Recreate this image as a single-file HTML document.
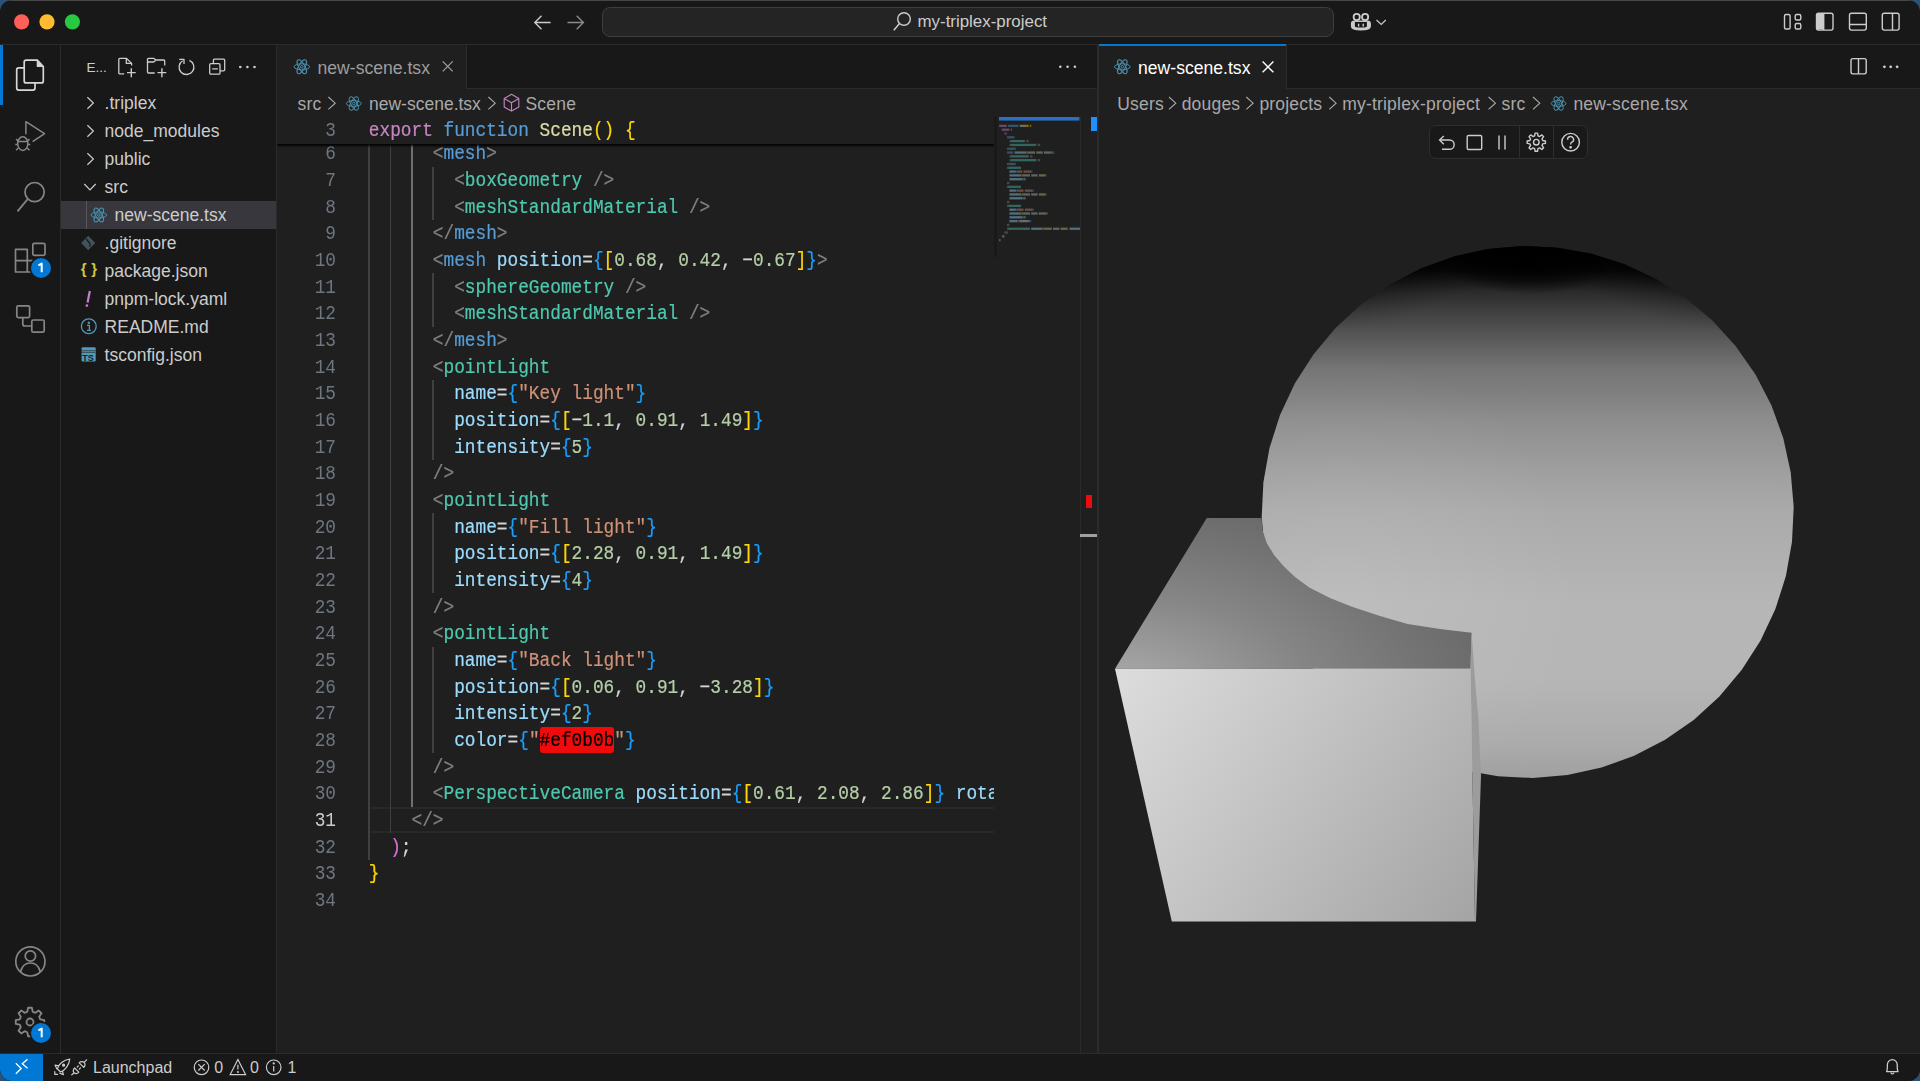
<!DOCTYPE html><html><head><meta charset="utf-8"><style>
*{margin:0;padding:0;box-sizing:border-box}
html,body{width:1920px;height:1081px;overflow:hidden;background:#2b5276}
.win{position:absolute;left:0;top:0;width:1920px;height:1081px;border-radius:12px;overflow:hidden;background:#181818}
.t{position:absolute;white-space:pre;font-family:"Liberation Sans",sans-serif;color:#cccccc}
.m{font-family:"Liberation Mono",monospace}
svg{position:absolute;overflow:visible}
.ln{transform:scaleY(1.13);position:absolute;left:277px;width:59px;text-align:right;font-family:"Liberation Mono",monospace;font-size:17.8px;color:#6e7681;height:26.67px;line-height:26.67px;white-space:pre}
.cl{-webkit-text-stroke:0.2px currentColor;transform:scaleY(1.13);position:absolute;left:368.8px;font-family:"Liberation Mono",monospace;font-size:17.8px;color:#d4d4d4;height:26.67px;line-height:26.67px;white-space:pre}
.k{color:#c586c0}.b{color:#569cd6}.f{color:#dcdcaa}.g{color:#ffd700}.o{color:#da70d6}.bb{color:#179fff}
.p{color:#808080}.tl{color:#4ec9b0}.a{color:#9cdcfe}.n{color:#b5cea8}.s{color:#ce9178}
</style></head><body><div class="win"><div style="position:absolute;left:0px;top:0px;width:1920px;height:1px;background:#464646"></div><div style="position:absolute;left:0px;top:44px;width:1920px;height:1px;background:#2b2b2b"></div><svg style="left:0px;top:0px" width="100" height="44"><circle cx="21.6" cy="21.8" r="7.6" fill="#ff5f57"/><circle cx="47" cy="21.8" r="7.6" fill="#febc2e"/><circle cx="72.4" cy="21.8" r="7.6" fill="#28c840"/></svg><svg style="left:530px;top:10px" width="60" height="25" viewBox="530 10 60 25" ><path d="M550.6 22.5 H535 M541.5 15.8 L534.8 22.5 L541.5 29.2" stroke="#cccccc" stroke-width="1.4" fill="none"/><path d="M567.5 22.5 H583.2 M576.7 15.8 L583.4 22.5 L576.7 29.2" stroke="#8a8a8a" stroke-width="1.4" fill="none"/></svg><div style="position:absolute;left:602px;top:7px;width:732px;height:30px;background:#242424;border:1px solid #3e3e3e;border-radius:8px"></div><svg style="left:890px;top:10px" width="25" height="25" viewBox="890 10 25 25"><circle cx="904" cy="19" r="6.3" stroke="#cccccc" stroke-width="1.4" fill="none"/><path d="M899.5 23.5 L893.8 30.2" stroke="#cccccc" stroke-width="1.5"/></svg><div class="t" style="left:917.5px;top:7.199999999999999px;height:30px;line-height:30px;font-size:16.9px;color:#cccccc">my-triplex-project</div><svg style="left:1348px;top:10px" width="42" height="25" viewBox="1348 10 42 25"><path d="M1351.5 23.8 C1351.5 22 1352.8 21.2 1354.5 21.2 H1367.3 C1369 21.2 1370.3 22 1370.3 23.8 V26.3 C1370.3 28.8 1366.5 30 1360.9 30 C1355.3 30 1351.5 28.8 1351.5 26.3 Z" fill="#cccccc" stroke="#cccccc" stroke-width="1.2"/><path d="M1354.9 22 H1366.9 V26.2 C1366.9 27.2 1364 27.6 1360.9 27.6 C1357.8 27.6 1354.9 27.2 1354.9 26.2 Z" fill="#181818"/><rect x="1357.9" y="23.4" width="1.4" height="3.3" rx="0.7" fill="#cccccc"/><rect x="1362.5" y="23.4" width="1.4" height="3.3" rx="0.7" fill="#cccccc"/><circle cx="1356.7" cy="17" r="3.1" stroke="#cccccc" stroke-width="1.8" fill="#181818"/><circle cx="1365.1" cy="17" r="3.1" stroke="#cccccc" stroke-width="1.8" fill="#181818"/><path d="M1376.5 20 L1381.2 24.4 L1385.8 20" stroke="#cccccc" stroke-width="1.2" fill="none"/></svg><svg style="left:1780px;top:10px" width="125" height="25" viewBox="1780 10 125 25" fill="none" stroke="#cccccc" stroke-width="1.4"><rect x="1784.5" y="14.5" width="5.6" height="14.5" rx="1.5"/><rect x="1795.2" y="14.5" width="5.6" height="5.5" rx="1.5"/><rect x="1795.2" y="23.5" width="5.6" height="5.5" rx="1.5"/><rect x="1816.5" y="13.3" width="16.5" height="16.8" rx="2"/><rect x="1817" y="13.8" width="6.5" height="15.8" fill="#cccccc" stroke="none"/><path d="M1823.7 13.3 V30"/><rect x="1849.5" y="13.3" width="16.8" height="16.8" rx="2"/><path d="M1849.5 24.5 H1866.3"/><rect x="1882.3" y="13.3" width="16.8" height="16.8" rx="2"/><path d="M1892.5 13.3 V30"/></svg><div style="position:absolute;left:60px;top:45px;width:1px;height:1008px;background:#2b2b2b"></div><div style="position:absolute;left:0px;top:45px;width:2.6px;height:60px;background:#0078d4"></div><svg style="left:0px;top:45px" width="60" height="1008" viewBox="0 45 60 1008" fill="none" stroke-width="1.7" stroke-linejoin="round"><path d="M24.3 67.8 H18.7 a2 2 0 0 0 -2 2 V88.1 a2 2 0 0 0 2 2 H33 a2 2 0 0 0 2 -2 V82.9" stroke="#d7d7d7"/><path d="M26.2 60.1 H37.3 L43.3 66.5 V80.9 a2 2 0 0 1 -2 2 H26.2 a2 2 0 0 1 -2 -2 V62.1 a2 2 0 0 1 2 -2 Z" stroke="#d7d7d7"/><path d="M37.3 60.5 V66.3 H43" stroke="#d7d7d7" fill="#d7d7d7" stroke-width="1.2"/><path d="M25.9 134.3 V121.7 L44.6 133.7 L32.6 141.6" stroke="#868686" stroke-width="1.5"/><ellipse cx="22.8" cy="143.6" rx="5.1" ry="6.8" stroke="#868686" stroke-width="1.5"/><path d="M17.8 141.6 H27.8 M16.1 139.1 L18.4 141.1 M29.5 139.1 L27.2 141.1 M15.3 144.6 H17.6 M28 144.6 H30.3 M16.1 150.2 L18.4 148 M29.5 150.2 L27.2 148" stroke="#868686" stroke-width="1.5"/><circle cx="34.6" cy="192.1" r="9.6" stroke="#868686"/><path d="M27.8 199 L17.5 211.4" stroke="#868686" stroke-width="1.9"/><path d="M15.5 249.3 H27.3 V272 H15.5 Z M15.5 260.6 H39 V272 H27.3" stroke="#868686"/><rect x="32.8" y="243.3" width="12.2" height="12" rx="1.5" stroke="#868686"/><rect x="16.8" y="305.8" width="12.8" height="11.8" rx="1.5" stroke="#868686"/><rect x="31.8" y="320" width="12.4" height="12.2" rx="1.5" stroke="#868686"/><path d="M22.8 317.6 V324 a2 2 0 0 0 2 2 H31.8" stroke="#868686"/><circle cx="30.4" cy="961.4" r="14.6" stroke="#868686"/><circle cx="30.4" cy="956" r="5.2" stroke="#868686"/><path d="M20.5 972 C22 965.5 26 963 30.4 963 C34.8 963 38.8 965.5 40.3 972" stroke="#868686"/></svg><svg style="left:0px;top:990px" width="60" height="60" viewBox="0 990 60 60" fill="none"><path d="M40.25 1019.28 L44.27 1020.08 L44.27 1023.92 L40.25 1024.72 L39.17 1027.32 L41.45 1030.74 L38.74 1033.45 L35.32 1031.17 L32.72 1032.25 L31.92 1036.27 L28.08 1036.27 L27.28 1032.25 L24.68 1031.17 L21.26 1033.45 L18.55 1030.74 L20.83 1027.32 L19.75 1024.72 L15.73 1023.92 L15.73 1020.08 L19.75 1019.28 L20.83 1016.68 L18.55 1013.26 L21.26 1010.55 L24.68 1012.83 L27.28 1011.75 L28.08 1007.73 L31.92 1007.73 L32.72 1011.75 L35.32 1012.83 L38.74 1010.55 L41.45 1013.26 L39.17 1016.68 Z" stroke="#868686" stroke-width="1.8" stroke-linejoin="round"/><circle cx="30" cy="1022" r="3.5" stroke="#868686" stroke-width="1.8"/></svg><div style="position:absolute;left:30.799999999999997px;top:258.2px;width:20px;height:20px;border-radius:10px;background:#0078d4;box-shadow:0 0 0 1.5px #181818"></div><svg style="left:30.799999999999997px;top:258.2px" width="20" height="20" viewBox="30.799999999999997 258.2 20 20"><path d="M38.199999999999996 265.59999999999997 L41.5 263.8 V272.5" stroke="#fff" stroke-width="2" fill="none" stroke-linejoin="round"/></svg><div style="position:absolute;left:30.700000000000003px;top:1022.5999999999999px;width:20px;height:20px;border-radius:10px;background:#0078d4;box-shadow:0 0 0 1.5px #181818"></div><svg style="left:30.700000000000003px;top:1022.5999999999999px" width="20" height="20" viewBox="30.700000000000003 1022.5999999999999 20 20"><path d="M38.1 1030.0 L41.400000000000006 1028.1999999999998 V1036.8999999999999" stroke="#fff" stroke-width="2" fill="none" stroke-linejoin="round"/></svg><div style="position:absolute;left:276px;top:45px;width:1px;height:1008px;background:#2b2b2b"></div><div class="t" style="left:86.5px;top:57.5px;height:20px;line-height:20px;font-size:13.6px;color:#cccccc">E...</div><svg style="left:110px;top:50px" width="160" height="35" viewBox="110 50 160 35" fill="none" stroke="#cccccc" stroke-width="1.3" stroke-linejoin="round"><path d="M124.2 73.9 H119.8 a1 1 0 0 1 -1 -1 V59.3 a1 1 0 0 1 1 -1 H126.3 L131.6 63.4 V65.6"/><path d="M126.3 58.3 V63.4 H131.6"/><path d="M131.3 68.2 V77.2 M127 72.6 H135.7" stroke-width="1.4"/><path d="M154.7 73 H148.5 a1 1 0 0 1 -1 -1 V59.3 a1 1 0 0 1 1 -1 H153.7 L155.7 60 H163.7 a1 1 0 0 1 1 1 V65.6"/><path d="M147.5 62 H153.7 L155.7 60.2"/><path d="M161.9 68.2 V77.2 M157.5 72.6 H166.3" stroke-width="1.4"/><path d="M189.4 60.3 A7.4 7.4 0 1 1 182.6 60.8"/><path d="M179.2 59.3 H184 V64"/><path d="M213.4 63.6 V60.2 a1 1 0 0 1 1 -1 H223.7 a1 1 0 0 1 1 1 V69.8 a1 1 0 0 1 -1 1 H220"/><rect x="209.7" y="63.6" width="10.3" height="10.6" rx="1.2"/><path d="M212.2 68.8 H217.9"/></svg><svg style="left:235px;top:60px" width="25" height="15" viewBox="235 60 25 15" fill="#cccccc"><circle cx="240.3" cy="67" r="1.3"/><circle cx="247.4" cy="67" r="1.3"/><circle cx="254.5" cy="67" r="1.3"/></svg><div style="position:absolute;left:61px;top:201px;width:215px;height:28px;background:#37373d"></div><div style="position:absolute;left:86.3px;top:201px;width:1px;height:28px;background:#585858"></div><svg style="left:61px;top:85px" width="215" height="290" viewBox="61 85 215 290"><path d="M87.4 97.2 L93.4 103 L87.4 108.8" stroke="#cccccc" stroke-width="1.2" fill="none"/><path d="M87.4 125.2 L93.4 131 L87.4 136.8" stroke="#cccccc" stroke-width="1.2" fill="none"/><path d="M87.4 153.2 L93.4 159 L87.4 164.8" stroke="#cccccc" stroke-width="1.2" fill="none"/><path d="M84.3 184 L90 190 L95.7 184" stroke="#cccccc" stroke-width="1.2" fill="none"/><g transform="translate(98.8 215)" fill="none" stroke="#4a8fae" stroke-width="1.0"><ellipse rx="7.8" ry="3.0"/><ellipse rx="7.8" ry="3.0" transform="rotate(60)"/><ellipse rx="7.8" ry="3.0" transform="rotate(-60)"/><circle r="1.3" fill="none" stroke-width="1.0"/></g><path d="M88.2 235.7 L95.3 243 L88.2 250.3 L81.1 243 Z" fill="#41535b"/><path d="M86.2 239 L90 243.5 V247" stroke="#181818" stroke-width="1.2" fill="none"/><text x="80.8" y="274.2" font-family="Liberation Sans" font-size="15" font-weight="bold" fill="#cbcb41" letter-spacing="0.2">{ }</text><path d="M89.8 291 L87.6 302.5" stroke="#c47fd0" stroke-width="2.2"/><circle cx="86.9" cy="305.6" r="1.3" fill="#c47fd0"/><circle cx="88.8" cy="326.2" r="7.4" stroke="#519aba" stroke-width="1.3" fill="none"/><circle cx="88.8" cy="322.7" r="1.2" fill="#519aba"/><path d="M87 325.4 H89.4 V330.2 M86.9 330.3 H90.9" stroke="#519aba" stroke-width="1.3" fill="none"/><rect x="81.6" y="347.2" width="14.1" height="14.3" rx="1.2" fill="#519aba"/><path d="M81.3 350.7 H95.3 M81.3 352.4 H95.3" stroke="#1b1b1b" stroke-width="0.6"/><text x="82.3" y="361" font-family="Liberation Sans" font-size="9" font-weight="bold" fill="#1b1b1b">TS</text></svg><div class="t" style="left:104.6px;top:89.0px;height:28px;line-height:28px;font-size:17.5px;color:#cccccc">.triplex</div><div class="t" style="left:104.6px;top:117.0px;height:28px;line-height:28px;font-size:17.5px;color:#cccccc">node_modules</div><div class="t" style="left:104.6px;top:145.0px;height:28px;line-height:28px;font-size:17.5px;color:#cccccc">public</div><div class="t" style="left:104.6px;top:173.0px;height:28px;line-height:28px;font-size:17.5px;color:#cccccc">src</div><div class="t" style="left:114.6px;top:201.0px;height:28px;line-height:28px;font-size:17.5px;color:#cccccc">new-scene.tsx</div><div class="t" style="left:104.6px;top:229.0px;height:28px;line-height:28px;font-size:17.5px;color:#cccccc">.gitignore</div><div class="t" style="left:104.6px;top:257.0px;height:28px;line-height:28px;font-size:17.5px;color:#cccccc">package.json</div><div class="t" style="left:104.6px;top:285.0px;height:28px;line-height:28px;font-size:17.5px;color:#cccccc">pnpm-lock.yaml</div><div class="t" style="left:104.6px;top:313.0px;height:28px;line-height:28px;font-size:17.5px;color:#cccccc">README.md</div><div class="t" style="left:104.6px;top:341.0px;height:28px;line-height:28px;font-size:17.5px;color:#cccccc">tsconfig.json</div><div style="position:absolute;left:277px;top:45px;width:821px;height:44px;background:#181818"></div><div style="position:absolute;left:277px;top:88px;width:821px;height:1px;background:#2b2b2b"></div><div style="position:absolute;left:277px;top:45px;width:189px;height:44px;background:#1f1f1f"></div><div style="position:absolute;left:466px;top:45px;width:1px;height:43px;background:#2b2b2b"></div><svg style="left:285px;top:52px" width="180" height="30" viewBox="285 52 180 30"><g transform="translate(301.8 66.8)" fill="none" stroke="#4a8fae" stroke-width="1.0"><ellipse rx="7.8" ry="3.0"/><ellipse rx="7.8" ry="3.0" transform="rotate(60)"/><ellipse rx="7.8" ry="3.0" transform="rotate(-60)"/><circle r="1.3" fill="none" stroke-width="1.0"/></g><path d="M442.7 61.4 L452.7 71.4 M452.7 61.4 L442.7 71.4" stroke="#9d9d9d" stroke-width="1.3"/></svg><div class="t" style="left:317.5px;top:54.0px;height:28px;line-height:28px;font-size:17.6px;color:#9d9d9d">new-scene.tsx</div><svg style="left:1050px;top:60px" width="30" height="15" viewBox="1050 60 30 15" fill="#cccccc"><circle cx="1060.3" cy="66.8" r="1.3"/><circle cx="1067.6" cy="66.8" r="1.3"/><circle cx="1074.9" cy="66.8" r="1.3"/></svg><div style="position:absolute;left:277px;top:89px;width:820px;height:964px;background:#1f1f1f"></div><div class="t" style="left:297.5px;top:89.5px;height:28px;line-height:28px;font-size:17.5px;letter-spacing:0.2px;color:#a9a9a9">src</div><svg style="left:320px;top:90px" width="230" height="28" viewBox="320 90 230 28"><path d="M328.4 97 L335.2 103.2 L328.4 109.4" stroke="#a9a9a9" stroke-width="1.1" fill="none"/><g transform="translate(353.8 103.5)" fill="none" stroke="#4a8fae" stroke-width="1.0"><ellipse rx="7.409999999999999" ry="2.8499999999999996"/><ellipse rx="7.409999999999999" ry="2.8499999999999996" transform="rotate(60)"/><ellipse rx="7.409999999999999" ry="2.8499999999999996" transform="rotate(-60)"/><circle r="1.2349999999999999" fill="none" stroke-width="1.0"/></g><path d="M488.4 97 L495.2 103.2 L488.4 109.4" stroke="#a9a9a9" stroke-width="1.1" fill="none"/><g fill="none" stroke="#c586c0" stroke-width="1.1" stroke-linejoin="round"><path d="M511.5 94.3 L518.8 98.5 V107 L511.5 111.1 L504.2 107 V98.5 Z"/><path d="M504.2 98.5 L511.5 102.7 L518.8 98.5 M511.5 102.7 V111.1"/></g></svg><div class="t" style="left:369px;top:89.5px;height:28px;line-height:28px;font-size:17.5px;letter-spacing:0.0px;color:#a9a9a9">new-scene.tsx</div><div class="t" style="left:525.5px;top:89.5px;height:28px;line-height:28px;font-size:17.5px;letter-spacing:0.2px;color:#a9a9a9">Scene</div><div style="position:absolute;left:277px;top:117px;width:717px;height:936px;overflow:hidden"><div style="position:absolute;left:92px;top:689.8px;width:625px;height:26.667px;border-top:2px solid #282828;border-bottom:2px solid #282828"></div><div style="position:absolute;left:262.68000000000006px;top:609.8px;width:74.75999999999999px;height:26.3px;background:#ef0b0b;border-radius:3px"></div><div style="position:absolute;left:91.30000000000001px;top:-30.20900000000006px;width:1.5px;height:773.3430000000001px;background:#404040"></div><div style="position:absolute;left:112.66000000000003px;top:-3.5420000000001437px;width:1.5px;height:720.0090000000001px;background:#404040"></div><div style="position:absolute;left:134.01999999999998px;top:23.124999999999886px;width:1.5px;height:666.6750000000001px;background:#707070"></div><div style="position:absolute;left:155.38px;top:49.791999999999916px;width:1.5px;height:53.33400000000006px;background:#404040"></div><div style="position:absolute;left:155.38px;top:156.45999999999992px;width:1.5px;height:53.334px;background:#404040"></div><div style="position:absolute;left:155.38px;top:263.12799999999993px;width:1.5px;height:80.00099999999998px;background:#404040"></div><div style="position:absolute;left:155.38px;top:396.46299999999997px;width:1.5px;height:80.00099999999998px;background:#404040"></div><div style="position:absolute;left:155.38px;top:529.798px;width:1.5px;height:106.66799999999989px;background:#404040"></div><div class="ln" style="left:0;top:-29.90900000000006px;">4</div><div class="ln" style="left:0;top:-3.242000000000144px;">5</div><div class="ln" style="left:0;top:23.424999999999887px;">6</div><div class="cl" style="left:91.80000000000001px;top:23.424999999999887px">      <span class="p">&lt;</span><span class="b">mesh</span><span class="p">&gt;</span></div><div class="ln" style="left:0;top:50.09199999999991px;">7</div><div class="cl" style="left:91.80000000000001px;top:50.09199999999991px">        <span class="p">&lt;</span><span class="tl">boxGeometry</span> <span class="p">/&gt;</span></div><div class="ln" style="left:0;top:76.75899999999994px;">8</div><div class="cl" style="left:91.80000000000001px;top:76.75899999999994px">        <span class="p">&lt;</span><span class="tl">meshStandardMaterial</span> <span class="p">/&gt;</span></div><div class="ln" style="left:0;top:103.42599999999997px;">9</div><div class="cl" style="left:91.80000000000001px;top:103.42599999999997px">      <span class="p">&lt;/</span><span class="b">mesh</span><span class="p">&gt;</span></div><div class="ln" style="left:0;top:130.0929999999999px;">10</div><div class="cl" style="left:91.80000000000001px;top:130.0929999999999px">      <span class="p">&lt;</span><span class="b">mesh</span> <span class="a">position</span>=<span class="bb">{</span><span class="g">[</span><span class="n">0.68</span>, <span class="n">0.42</span>, −<span class="n">0.67</span><span class="g">]</span><span class="bb">}</span><span class="p">&gt;</span></div><div class="ln" style="left:0;top:156.75999999999993px;">11</div><div class="cl" style="left:91.80000000000001px;top:156.75999999999993px">        <span class="p">&lt;</span><span class="tl">sphereGeometry</span> <span class="p">/&gt;</span></div><div class="ln" style="left:0;top:183.42699999999996px;">12</div><div class="cl" style="left:91.80000000000001px;top:183.42699999999996px">        <span class="p">&lt;</span><span class="tl">meshStandardMaterial</span> <span class="p">/&gt;</span></div><div class="ln" style="left:0;top:210.09399999999994px;">13</div><div class="cl" style="left:91.80000000000001px;top:210.09399999999994px">      <span class="p">&lt;/</span><span class="b">mesh</span><span class="p">&gt;</span></div><div class="ln" style="left:0;top:236.7609999999999px;">14</div><div class="cl" style="left:91.80000000000001px;top:236.7609999999999px">      <span class="p">&lt;</span><span class="tl">pointLight</span></div><div class="ln" style="left:0;top:263.42799999999994px;">15</div><div class="cl" style="left:91.80000000000001px;top:263.42799999999994px">        <span class="a">name</span>=<span class="bb">{</span><span class="s">&quot;Key light&quot;</span><span class="bb">}</span></div><div class="ln" style="left:0;top:290.09499999999997px;">16</div><div class="cl" style="left:91.80000000000001px;top:290.09499999999997px">        <span class="a">position</span>=<span class="bb">{</span><span class="g">[</span>−<span class="n">1.1</span>, <span class="n">0.91</span>, <span class="n">1.49</span><span class="g">]</span><span class="bb">}</span></div><div class="ln" style="left:0;top:316.76199999999994px;">17</div><div class="cl" style="left:91.80000000000001px;top:316.76199999999994px">        <span class="a">intensity</span>=<span class="bb">{</span><span class="n">5</span><span class="bb">}</span></div><div class="ln" style="left:0;top:343.4289999999999px;">18</div><div class="cl" style="left:91.80000000000001px;top:343.4289999999999px">      <span class="p">/&gt;</span></div><div class="ln" style="left:0;top:370.09599999999995px;">19</div><div class="cl" style="left:91.80000000000001px;top:370.09599999999995px">      <span class="p">&lt;</span><span class="tl">pointLight</span></div><div class="ln" style="left:0;top:396.763px;">20</div><div class="cl" style="left:91.80000000000001px;top:396.763px">        <span class="a">name</span>=<span class="bb">{</span><span class="s">&quot;Fill light&quot;</span><span class="bb">}</span></div><div class="ln" style="left:0;top:423.4299999999999px;">21</div><div class="cl" style="left:91.80000000000001px;top:423.4299999999999px">        <span class="a">position</span>=<span class="bb">{</span><span class="g">[</span><span class="n">2.28</span>, <span class="n">0.91</span>, <span class="n">1.49</span><span class="g">]</span><span class="bb">}</span></div><div class="ln" style="left:0;top:450.0969999999999px;">22</div><div class="cl" style="left:91.80000000000001px;top:450.0969999999999px">        <span class="a">intensity</span>=<span class="bb">{</span><span class="n">4</span><span class="bb">}</span></div><div class="ln" style="left:0;top:476.76399999999995px;">23</div><div class="cl" style="left:91.80000000000001px;top:476.76399999999995px">      <span class="p">/&gt;</span></div><div class="ln" style="left:0;top:503.431px;">24</div><div class="cl" style="left:91.80000000000001px;top:503.431px">      <span class="p">&lt;</span><span class="tl">pointLight</span></div><div class="ln" style="left:0;top:530.098px;">25</div><div class="cl" style="left:91.80000000000001px;top:530.098px">        <span class="a">name</span>=<span class="bb">{</span><span class="s">&quot;Back light&quot;</span><span class="bb">}</span></div><div class="ln" style="left:0;top:556.7649999999999px;">26</div><div class="cl" style="left:91.80000000000001px;top:556.7649999999999px">        <span class="a">position</span>=<span class="bb">{</span><span class="g">[</span><span class="n">0.06</span>, <span class="n">0.91</span>, −<span class="n">3.28</span><span class="g">]</span><span class="bb">}</span></div><div class="ln" style="left:0;top:583.4319999999999px;">27</div><div class="cl" style="left:91.80000000000001px;top:583.4319999999999px">        <span class="a">intensity</span>=<span class="bb">{</span><span class="n">2</span><span class="bb">}</span></div><div class="ln" style="left:0;top:610.0989999999999px;">28</div><div class="cl" style="left:91.80000000000001px;top:610.0989999999999px">        <span class="a">color</span>=<span class="bb">{</span><span class="s">&quot;</span><span style="color:#000">#ef0b0b</span><span class="s">&quot;</span><span class="bb">}</span></div><div class="ln" style="left:0;top:636.7659999999998px;">29</div><div class="cl" style="left:91.80000000000001px;top:636.7659999999998px">      <span class="p">/&gt;</span></div><div class="ln" style="left:0;top:663.4329999999999px;">30</div><div class="cl" style="left:91.80000000000001px;top:663.4329999999999px">      <span class="p">&lt;</span><span class="tl">PerspectiveCamera</span> <span class="a">position</span>=<span class="bb">{</span><span class="g">[</span><span class="n">0.61</span>, <span class="n">2.08</span>, <span class="n">2.86</span><span class="g">]</span><span class="bb">}</span> <span class="a">rotation</span>=<span class="bb">{</span><span class="g">[</span>−<span class="n">0.63</span>, <span class="n">0.19</span>, <span class="n">0.13</span><span class="g">]</span><span class="bb">}</span> <span class="a">makeDefault</span> <span class="p">/&gt;</span></div><div class="ln" style="left:0;top:690.0999999999999px;color:#cccccc">31</div><div class="cl" style="left:91.80000000000001px;top:690.0999999999999px">    <span class="p">&lt;/&gt;</span></div><div class="ln" style="left:0;top:716.7669999999999px;">32</div><div class="cl" style="left:91.80000000000001px;top:716.7669999999999px">  <span class="o">)</span>;</div><div class="ln" style="left:0;top:743.434px;">33</div><div class="cl" style="left:91.80000000000001px;top:743.434px"><span class="g">}</span></div><div class="ln" style="left:0;top:770.1009999999999px;">34</div><div class="cl" style="left:91.80000000000001px;top:770.1009999999999px"></div><div style="position:absolute;left:0px;top:0px;width:717px;height:26.67px;background:#1f1f1f;box-shadow:0 2px 2px rgba(0,0,0,0.9)"></div><div class="ln" style="left:0;top:0.3px">3</div><div class="cl" style="left:91.80000000000001px;top:0.3px"><span class="k">export</span> <span class="b">function</span> <span class="f">Scene</span><span class="g">()</span> <span class="g">{</span></div></div><svg style="left:994px;top:117px;overflow:hidden" width="85.5" height="140" viewBox="994 117 85.5 140"><rect x="994" y="117" width="3" height="140" fill="#161616" opacity="0.6"/><rect x="999" y="117" width="80.4" height="3.6" fill="#2a6fc4"/><rect x="1077" y="117" width="0" height="3.6" fill="#3794ff"/><rect x="999.20" y="124.72" width="7.68" height="2.3" fill="#c586c0" opacity="0.42"/><rect x="1008.16" y="124.72" width="10.24" height="2.3" fill="#569cd6" opacity="0.42"/><rect x="1019.68" y="124.72" width="6.40" height="2.3" fill="#dcdcaa" opacity="0.42"/><rect x="1026.08" y="124.72" width="2.56" height="2.3" fill="#ffd700" opacity="0.42"/><rect x="1029.92" y="124.72" width="1.28" height="2.3" fill="#ffd700" opacity="0.42"/><rect x="1001.76" y="128.53" width="7.68" height="2.3" fill="#c586c0" opacity="0.42"/><rect x="1010.72" y="128.53" width="1.28" height="2.3" fill="#da70d6" opacity="0.42"/><rect x="1004.32" y="132.34" width="2.56" height="2.3" fill="#808080" opacity="0.42"/><rect x="1006.88" y="136.15" width="1.28" height="2.3" fill="#808080" opacity="0.42"/><rect x="1008.16" y="136.15" width="5.12" height="2.3" fill="#569cd6" opacity="0.42"/><rect x="1013.28" y="136.15" width="1.28" height="2.3" fill="#808080" opacity="0.42"/><rect x="1009.44" y="139.96" width="1.28" height="2.3" fill="#808080" opacity="0.42"/><rect x="1010.72" y="139.96" width="14.08" height="2.3" fill="#4ec9b0" opacity="0.42"/><rect x="1026.08" y="139.96" width="2.56" height="2.3" fill="#808080" opacity="0.42"/><rect x="1009.44" y="143.77" width="1.28" height="2.3" fill="#808080" opacity="0.42"/><rect x="1010.72" y="143.77" width="25.60" height="2.3" fill="#4ec9b0" opacity="0.42"/><rect x="1037.60" y="143.77" width="2.56" height="2.3" fill="#808080" opacity="0.42"/><rect x="1006.88" y="147.58" width="2.56" height="2.3" fill="#808080" opacity="0.42"/><rect x="1009.44" y="147.58" width="5.12" height="2.3" fill="#569cd6" opacity="0.42"/><rect x="1014.56" y="147.58" width="1.28" height="2.3" fill="#808080" opacity="0.42"/><rect x="1006.88" y="151.39" width="1.28" height="2.3" fill="#808080" opacity="0.42"/><rect x="1008.16" y="151.39" width="5.12" height="2.3" fill="#569cd6" opacity="0.42"/><rect x="1014.56" y="151.39" width="10.24" height="2.3" fill="#9cdcfe" opacity="0.42"/><rect x="1024.80" y="151.39" width="1.28" height="2.3" fill="#d4d4d4" opacity="0.42"/><rect x="1026.08" y="151.39" width="1.28" height="2.3" fill="#179fff" opacity="0.42"/><rect x="1027.36" y="151.39" width="1.28" height="2.3" fill="#ffd700" opacity="0.42"/><rect x="1028.64" y="151.39" width="5.12" height="2.3" fill="#b5cea8" opacity="0.42"/><rect x="1033.76" y="151.39" width="1.28" height="2.3" fill="#d4d4d4" opacity="0.42"/><rect x="1036.32" y="151.39" width="5.12" height="2.3" fill="#b5cea8" opacity="0.42"/><rect x="1041.44" y="151.39" width="1.28" height="2.3" fill="#d4d4d4" opacity="0.42"/><rect x="1044.00" y="151.39" width="1.28" height="2.3" fill="#d4d4d4" opacity="0.42"/><rect x="1045.28" y="151.39" width="5.12" height="2.3" fill="#b5cea8" opacity="0.42"/><rect x="1050.40" y="151.39" width="1.28" height="2.3" fill="#ffd700" opacity="0.42"/><rect x="1051.68" y="151.39" width="1.28" height="2.3" fill="#179fff" opacity="0.42"/><rect x="1052.96" y="151.39" width="1.28" height="2.3" fill="#808080" opacity="0.42"/><rect x="1009.44" y="155.20" width="1.28" height="2.3" fill="#808080" opacity="0.42"/><rect x="1010.72" y="155.20" width="17.92" height="2.3" fill="#4ec9b0" opacity="0.42"/><rect x="1029.92" y="155.20" width="2.56" height="2.3" fill="#808080" opacity="0.42"/><rect x="1009.44" y="159.01" width="1.28" height="2.3" fill="#808080" opacity="0.42"/><rect x="1010.72" y="159.01" width="25.60" height="2.3" fill="#4ec9b0" opacity="0.42"/><rect x="1037.60" y="159.01" width="2.56" height="2.3" fill="#808080" opacity="0.42"/><rect x="1006.88" y="162.82" width="2.56" height="2.3" fill="#808080" opacity="0.42"/><rect x="1009.44" y="162.82" width="5.12" height="2.3" fill="#569cd6" opacity="0.42"/><rect x="1014.56" y="162.82" width="1.28" height="2.3" fill="#808080" opacity="0.42"/><rect x="1006.88" y="166.63" width="1.28" height="2.3" fill="#808080" opacity="0.42"/><rect x="1008.16" y="166.63" width="12.80" height="2.3" fill="#4ec9b0" opacity="0.42"/><rect x="1009.44" y="170.44" width="5.12" height="2.3" fill="#9cdcfe" opacity="0.42"/><rect x="1014.56" y="170.44" width="1.28" height="2.3" fill="#d4d4d4" opacity="0.42"/><rect x="1015.84" y="170.44" width="1.28" height="2.3" fill="#179fff" opacity="0.42"/><rect x="1017.12" y="170.44" width="5.12" height="2.3" fill="#ce9178" opacity="0.42"/><rect x="1023.52" y="170.44" width="7.68" height="2.3" fill="#ce9178" opacity="0.42"/><rect x="1031.20" y="170.44" width="1.28" height="2.3" fill="#179fff" opacity="0.42"/><rect x="1009.44" y="174.25" width="10.24" height="2.3" fill="#9cdcfe" opacity="0.42"/><rect x="1019.68" y="174.25" width="1.28" height="2.3" fill="#d4d4d4" opacity="0.42"/><rect x="1020.96" y="174.25" width="1.28" height="2.3" fill="#179fff" opacity="0.42"/><rect x="1022.24" y="174.25" width="1.28" height="2.3" fill="#ffd700" opacity="0.42"/><rect x="1023.52" y="174.25" width="1.28" height="2.3" fill="#d4d4d4" opacity="0.42"/><rect x="1024.80" y="174.25" width="3.84" height="2.3" fill="#b5cea8" opacity="0.42"/><rect x="1028.64" y="174.25" width="1.28" height="2.3" fill="#d4d4d4" opacity="0.42"/><rect x="1031.20" y="174.25" width="5.12" height="2.3" fill="#b5cea8" opacity="0.42"/><rect x="1036.32" y="174.25" width="1.28" height="2.3" fill="#d4d4d4" opacity="0.42"/><rect x="1038.88" y="174.25" width="5.12" height="2.3" fill="#b5cea8" opacity="0.42"/><rect x="1044.00" y="174.25" width="1.28" height="2.3" fill="#ffd700" opacity="0.42"/><rect x="1045.28" y="174.25" width="1.28" height="2.3" fill="#179fff" opacity="0.42"/><rect x="1009.44" y="178.06" width="11.52" height="2.3" fill="#9cdcfe" opacity="0.42"/><rect x="1020.96" y="178.06" width="1.28" height="2.3" fill="#d4d4d4" opacity="0.42"/><rect x="1022.24" y="178.06" width="1.28" height="2.3" fill="#179fff" opacity="0.42"/><rect x="1023.52" y="178.06" width="1.28" height="2.3" fill="#b5cea8" opacity="0.42"/><rect x="1024.80" y="178.06" width="1.28" height="2.3" fill="#179fff" opacity="0.42"/><rect x="1006.88" y="181.87" width="2.56" height="2.3" fill="#808080" opacity="0.42"/><rect x="1006.88" y="185.68" width="1.28" height="2.3" fill="#808080" opacity="0.42"/><rect x="1008.16" y="185.68" width="12.80" height="2.3" fill="#4ec9b0" opacity="0.42"/><rect x="1009.44" y="189.49" width="5.12" height="2.3" fill="#9cdcfe" opacity="0.42"/><rect x="1014.56" y="189.49" width="1.28" height="2.3" fill="#d4d4d4" opacity="0.42"/><rect x="1015.84" y="189.49" width="1.28" height="2.3" fill="#179fff" opacity="0.42"/><rect x="1017.12" y="189.49" width="6.40" height="2.3" fill="#ce9178" opacity="0.42"/><rect x="1024.80" y="189.49" width="7.68" height="2.3" fill="#ce9178" opacity="0.42"/><rect x="1032.48" y="189.49" width="1.28" height="2.3" fill="#179fff" opacity="0.42"/><rect x="1009.44" y="193.30" width="10.24" height="2.3" fill="#9cdcfe" opacity="0.42"/><rect x="1019.68" y="193.30" width="1.28" height="2.3" fill="#d4d4d4" opacity="0.42"/><rect x="1020.96" y="193.30" width="1.28" height="2.3" fill="#179fff" opacity="0.42"/><rect x="1022.24" y="193.30" width="1.28" height="2.3" fill="#ffd700" opacity="0.42"/><rect x="1023.52" y="193.30" width="5.12" height="2.3" fill="#b5cea8" opacity="0.42"/><rect x="1028.64" y="193.30" width="1.28" height="2.3" fill="#d4d4d4" opacity="0.42"/><rect x="1031.20" y="193.30" width="5.12" height="2.3" fill="#b5cea8" opacity="0.42"/><rect x="1036.32" y="193.30" width="1.28" height="2.3" fill="#d4d4d4" opacity="0.42"/><rect x="1038.88" y="193.30" width="5.12" height="2.3" fill="#b5cea8" opacity="0.42"/><rect x="1044.00" y="193.30" width="1.28" height="2.3" fill="#ffd700" opacity="0.42"/><rect x="1045.28" y="193.30" width="1.28" height="2.3" fill="#179fff" opacity="0.42"/><rect x="1009.44" y="197.11" width="11.52" height="2.3" fill="#9cdcfe" opacity="0.42"/><rect x="1020.96" y="197.11" width="1.28" height="2.3" fill="#d4d4d4" opacity="0.42"/><rect x="1022.24" y="197.11" width="1.28" height="2.3" fill="#179fff" opacity="0.42"/><rect x="1023.52" y="197.11" width="1.28" height="2.3" fill="#b5cea8" opacity="0.42"/><rect x="1024.80" y="197.11" width="1.28" height="2.3" fill="#179fff" opacity="0.42"/><rect x="1006.88" y="200.92" width="2.56" height="2.3" fill="#808080" opacity="0.42"/><rect x="1006.88" y="204.73" width="1.28" height="2.3" fill="#808080" opacity="0.42"/><rect x="1008.16" y="204.73" width="12.80" height="2.3" fill="#4ec9b0" opacity="0.42"/><rect x="1009.44" y="208.54" width="5.12" height="2.3" fill="#9cdcfe" opacity="0.42"/><rect x="1014.56" y="208.54" width="1.28" height="2.3" fill="#d4d4d4" opacity="0.42"/><rect x="1015.84" y="208.54" width="1.28" height="2.3" fill="#179fff" opacity="0.42"/><rect x="1017.12" y="208.54" width="6.40" height="2.3" fill="#ce9178" opacity="0.42"/><rect x="1024.80" y="208.54" width="7.68" height="2.3" fill="#ce9178" opacity="0.42"/><rect x="1032.48" y="208.54" width="1.28" height="2.3" fill="#179fff" opacity="0.42"/><rect x="1009.44" y="212.35" width="10.24" height="2.3" fill="#9cdcfe" opacity="0.42"/><rect x="1019.68" y="212.35" width="1.28" height="2.3" fill="#d4d4d4" opacity="0.42"/><rect x="1020.96" y="212.35" width="1.28" height="2.3" fill="#179fff" opacity="0.42"/><rect x="1022.24" y="212.35" width="1.28" height="2.3" fill="#ffd700" opacity="0.42"/><rect x="1023.52" y="212.35" width="5.12" height="2.3" fill="#b5cea8" opacity="0.42"/><rect x="1028.64" y="212.35" width="1.28" height="2.3" fill="#d4d4d4" opacity="0.42"/><rect x="1031.20" y="212.35" width="5.12" height="2.3" fill="#b5cea8" opacity="0.42"/><rect x="1036.32" y="212.35" width="1.28" height="2.3" fill="#d4d4d4" opacity="0.42"/><rect x="1038.88" y="212.35" width="1.28" height="2.3" fill="#d4d4d4" opacity="0.42"/><rect x="1040.16" y="212.35" width="5.12" height="2.3" fill="#b5cea8" opacity="0.42"/><rect x="1045.28" y="212.35" width="1.28" height="2.3" fill="#ffd700" opacity="0.42"/><rect x="1046.56" y="212.35" width="1.28" height="2.3" fill="#179fff" opacity="0.42"/><rect x="1009.44" y="216.16" width="11.52" height="2.3" fill="#9cdcfe" opacity="0.42"/><rect x="1020.96" y="216.16" width="1.28" height="2.3" fill="#d4d4d4" opacity="0.42"/><rect x="1022.24" y="216.16" width="1.28" height="2.3" fill="#179fff" opacity="0.42"/><rect x="1023.52" y="216.16" width="1.28" height="2.3" fill="#b5cea8" opacity="0.42"/><rect x="1024.80" y="216.16" width="1.28" height="2.3" fill="#179fff" opacity="0.42"/><rect x="1009.44" y="219.97" width="6.40" height="2.3" fill="#9cdcfe" opacity="0.42"/><rect x="1015.84" y="219.97" width="1.28" height="2.3" fill="#d4d4d4" opacity="0.42"/><rect x="1017.12" y="219.97" width="1.28" height="2.3" fill="#179fff" opacity="0.42"/><rect x="1018.40" y="219.97" width="1.28" height="2.3" fill="#ce9178" opacity="0.42"/><rect x="1019.68" y="219.97" width="8.96" height="2.3" fill="#d4d4d4" opacity="0.42"/><rect x="1028.64" y="219.97" width="1.28" height="2.3" fill="#ce9178" opacity="0.42"/><rect x="1029.92" y="219.97" width="1.28" height="2.3" fill="#179fff" opacity="0.42"/><rect x="1006.88" y="223.78" width="2.56" height="2.3" fill="#808080" opacity="0.42"/><rect x="1006.88" y="227.59" width="1.28" height="2.3" fill="#808080" opacity="0.42"/><rect x="1008.16" y="227.59" width="21.76" height="2.3" fill="#4ec9b0" opacity="0.42"/><rect x="1031.20" y="227.59" width="10.24" height="2.3" fill="#9cdcfe" opacity="0.42"/><rect x="1041.44" y="227.59" width="1.28" height="2.3" fill="#d4d4d4" opacity="0.42"/><rect x="1042.72" y="227.59" width="1.28" height="2.3" fill="#179fff" opacity="0.42"/><rect x="1044.00" y="227.59" width="1.28" height="2.3" fill="#ffd700" opacity="0.42"/><rect x="1045.28" y="227.59" width="5.12" height="2.3" fill="#b5cea8" opacity="0.42"/><rect x="1050.40" y="227.59" width="1.28" height="2.3" fill="#d4d4d4" opacity="0.42"/><rect x="1052.96" y="227.59" width="5.12" height="2.3" fill="#b5cea8" opacity="0.42"/><rect x="1058.08" y="227.59" width="1.28" height="2.3" fill="#d4d4d4" opacity="0.42"/><rect x="1060.64" y="227.59" width="5.12" height="2.3" fill="#b5cea8" opacity="0.42"/><rect x="1065.76" y="227.59" width="1.28" height="2.3" fill="#ffd700" opacity="0.42"/><rect x="1067.04" y="227.59" width="1.28" height="2.3" fill="#179fff" opacity="0.42"/><rect x="1069.60" y="227.59" width="10.24" height="2.3" fill="#9cdcfe" opacity="0.42"/><rect x="1079.84" y="227.59" width="1.28" height="2.3" fill="#d4d4d4" opacity="0.42"/><rect x="1081.12" y="227.59" width="1.28" height="2.3" fill="#179fff" opacity="0.42"/><rect x="1082.40" y="227.59" width="1.28" height="2.3" fill="#ffd700" opacity="0.42"/><rect x="1083.68" y="227.59" width="1.28" height="2.3" fill="#d4d4d4" opacity="0.42"/><rect x="1084.96" y="227.59" width="5.12" height="2.3" fill="#b5cea8" opacity="0.42"/><rect x="1090.08" y="227.59" width="1.28" height="2.3" fill="#d4d4d4" opacity="0.42"/><rect x="1092.64" y="227.59" width="5.12" height="2.3" fill="#b5cea8" opacity="0.42"/><rect x="1097.76" y="227.59" width="1.28" height="2.3" fill="#d4d4d4" opacity="0.42"/><rect x="1100.32" y="227.59" width="5.12" height="2.3" fill="#b5cea8" opacity="0.42"/><rect x="1105.44" y="227.59" width="1.28" height="2.3" fill="#ffd700" opacity="0.42"/><rect x="1106.72" y="227.59" width="1.28" height="2.3" fill="#179fff" opacity="0.42"/><rect x="1109.28" y="227.59" width="14.08" height="2.3" fill="#9cdcfe" opacity="0.42"/><rect x="1124.64" y="227.59" width="2.56" height="2.3" fill="#808080" opacity="0.42"/><rect x="1004.32" y="231.40" width="3.84" height="2.3" fill="#808080" opacity="0.42"/><rect x="1001.76" y="235.21" width="1.28" height="2.3" fill="#da70d6" opacity="0.42"/><rect x="1003.04" y="235.21" width="1.28" height="2.3" fill="#d4d4d4" opacity="0.42"/><rect x="999.20" y="239.02" width="1.28" height="2.3" fill="#ffd700" opacity="0.42"/></svg><div style="position:absolute;left:1079.5px;top:117px;width:0.8px;height:936px;background:#2a2a2a"></div><div style="position:absolute;left:1091.3px;top:117px;width:5.9px;height:13.5px;background:#1e90ff"></div><div style="position:absolute;left:1085.7px;top:494.6px;width:6.3px;height:13.7px;background:#ee0b0b"></div><div style="position:absolute;left:1080px;top:534.2px;width:17.3px;height:2.8px;background:#a0a0a0"></div><div style="position:absolute;left:1097.2px;top:45px;width:1.5px;height:1008px;background:#2b2b2b"></div><div style="position:absolute;left:1098.7px;top:45px;width:821.3px;height:44px;background:#181818"></div><div style="position:absolute;left:1098.7px;top:88px;width:821.3px;height:1px;background:#2b2b2b"></div><div style="position:absolute;left:1098.7px;top:45px;width:187px;height:44px;background:#1f1f1f"></div><div style="position:absolute;left:1098.7px;top:44px;width:187px;height:2px;background:#0078d4"></div><div style="position:absolute;left:1285.7px;top:45px;width:1px;height:43px;background:#2b2b2b"></div><svg style="left:1105px;top:52px" width="180" height="30" viewBox="1105 52 180 30"><g transform="translate(1122.3 66.8)" fill="none" stroke="#4a8fae" stroke-width="1.0"><ellipse rx="7.8" ry="3.0"/><ellipse rx="7.8" ry="3.0" transform="rotate(60)"/><ellipse rx="7.8" ry="3.0" transform="rotate(-60)"/><circle r="1.3" fill="none" stroke-width="1.0"/></g><path d="M1262.6 61.5 L1273.4 72.3 M1273.4 61.5 L1262.6 72.3" stroke="#ffffff" stroke-width="1.4"/></svg><div class="t" style="left:1138px;top:54.0px;height:28px;line-height:28px;font-size:17.6px;color:#ffffff">new-scene.tsx</div><svg style="left:1845px;top:52px" width="60" height="30" viewBox="1845 52 60 30" fill="none" stroke="#cccccc" stroke-width="1.4"><rect x="1851" y="58.6" width="15.2" height="15.3" rx="1.8"/><path d="M1858.5 58.6 V73.9"/><g fill="#cccccc" stroke="none"><circle cx="1884.4" cy="66.8" r="1.4"/><circle cx="1890.7" cy="66.8" r="1.4"/><circle cx="1897.1" cy="66.8" r="1.4"/></g></svg><div style="position:absolute;left:1098.7px;top:89px;width:821.3px;height:964px;background:#1f1f1f"></div><div class="t" style="left:1117.2px;top:89.5px;height:28px;line-height:28px;font-size:17.5px;letter-spacing:0.2px;color:#a9a9a9">Users</div><div class="t" style="left:1181.7px;top:89.5px;height:28px;line-height:28px;font-size:17.5px;letter-spacing:0.2px;color:#a9a9a9">douges</div><div class="t" style="left:1259.4px;top:89.5px;height:28px;line-height:28px;font-size:17.5px;letter-spacing:0.2px;color:#a9a9a9">projects</div><div class="t" style="left:1342.2px;top:89.5px;height:28px;line-height:28px;font-size:17.5px;letter-spacing:0.2px;color:#a9a9a9">my-triplex-project</div><div class="t" style="left:1501.5px;top:89.5px;height:28px;line-height:28px;font-size:17.5px;letter-spacing:0.2px;color:#a9a9a9">src</div><div class="t" style="left:1573.4px;top:89.5px;height:28px;line-height:28px;font-size:17.5px;letter-spacing:0.2px;color:#a9a9a9">new-scene.tsx </div><svg style="left:1160px;top:90px" width="420" height="28" viewBox="1160 90 420 28"><path d="M1169 97 L1175.8 103.2 L1169 109.4" stroke="#a9a9a9" stroke-width="1.1" fill="none"/><path d="M1246.3 97 L1253.1 103.2 L1246.3 109.4" stroke="#a9a9a9" stroke-width="1.1" fill="none"/><path d="M1329.3 97 L1336.1 103.2 L1329.3 109.4" stroke="#a9a9a9" stroke-width="1.1" fill="none"/><path d="M1488.6 97 L1495.3999999999999 103.2 L1488.6 109.4" stroke="#a9a9a9" stroke-width="1.1" fill="none"/><path d="M1533 97 L1539.8 103.2 L1533 109.4" stroke="#a9a9a9" stroke-width="1.1" fill="none"/><g transform="translate(1558.6 103.5)" fill="none" stroke="#4a8fae" stroke-width="1.0"><ellipse rx="7.409999999999999" ry="2.8499999999999996"/><ellipse rx="7.409999999999999" ry="2.8499999999999996" transform="rotate(60)"/><ellipse rx="7.409999999999999" ry="2.8499999999999996" transform="rotate(-60)"/><circle r="1.2349999999999999" fill="none" stroke-width="1.0"/></g></svg><div style="position:absolute;left:1429.4px;top:125.3px;width:159px;height:34.2px;background:#191919;border:1px solid #2e2e2e;border-radius:7px"></div><div style="position:absolute;left:1519px;top:126px;width:1px;height:33px;background:#2e2e2e"></div><div style="position:absolute;left:1553.2px;top:126px;width:1px;height:33px;background:#2e2e2e"></div><svg style="left:1430px;top:126px" width="160" height="34" viewBox="1430 126 160 34" fill="none" stroke="#cccccc" stroke-width="1.4"><path d="M1440 140 H1449.5 a4.6 4.6 0 0 1 0 9.3 H1442"/><path d="M1443.8 136 L1439.6 140.1 L1443.8 144.2"/><rect x="1467.2" y="135.5" width="14.5" height="14" rx="1.3"/><path d="M1499 135.5 V149.5 M1505 135.5 V149.5"/><path d="M1542.68 140.51 L1545.42 140.98 L1545.42 143.42 L1542.68 143.89 L1542.01 145.51 L1543.61 147.78 L1541.88 149.51 L1539.61 147.91 L1537.99 148.58 L1537.52 151.32 L1535.08 151.32 L1534.61 148.58 L1532.99 147.91 L1530.72 149.51 L1528.99 147.78 L1530.59 145.51 L1529.92 143.89 L1527.18 143.42 L1527.18 140.98 L1529.92 140.51 L1530.59 138.89 L1528.99 136.62 L1530.72 134.89 L1532.99 136.49 L1534.61 135.82 L1535.08 133.08 L1537.52 133.08 L1537.99 135.82 L1539.61 136.49 L1541.88 134.89 L1543.61 136.62 L1542.01 138.89 Z" stroke-linejoin="round"/><circle cx="1536.3" cy="142.2" r="2.8"/><circle cx="1570.6" cy="142.2" r="8.8"/><path d="M1567.6 139.7 a3 3 0 1 1 4.3 2.5 c-1 .5 -1.3 1 -1.3 2.2"/><circle cx="1570.6" cy="147.3" r="0.7" fill="#cccccc"/></svg><div style="position:absolute;left:0px;top:1052.5px;width:1920px;height:1px;background:#2b2b2b"></div><div style="position:absolute;left:0px;top:1053.5px;width:1920px;height:27.5px;background:#181818"></div><div style="position:absolute;left:0px;top:1053.5px;width:43.3px;height:27.5px;background:#0078d4"></div><svg style="left:0px;top:1053px" width="300" height="28" viewBox="0 1053 300 28" fill="none" stroke="#ffffff" stroke-width="1.3"><path d="M15.8 1063.3 L21.2 1068.5 L15.8 1073.7 M27.5 1059.2 L22.3 1063.8 L27.5 1068.3"/><g stroke="#cccccc" stroke-width="1.2" stroke-linejoin="round" stroke-linecap="round"><path d="M57.3 1068.8 C58.6 1064.2 63.3 1060 69.8 1059 C69 1065.6 64.8 1070.4 60.6 1072 Z"/><path d="M58.9 1065.8 L55 1065 L56.8 1068.8 M62.5 1071.4 L63.4 1074.6 L59.8 1073.2"/><path d="M54.8 1071.6 V1074.3 H57.6"/><circle cx="63.6" cy="1065.2" r="1" fill="#cccccc"/><path d="M79.2 1062.8 L83.8 1067.4 C85.3 1066 85.4 1063.8 84.2 1062.6 C83 1061.4 80.6 1061.3 79.2 1062.8 Z"/><path d="M84.4 1062.2 L86.6 1059.8"/><path d="M74.6 1068 L78.8 1072.2 C77.4 1073.8 75.3 1073.9 74 1072.8 C72.9 1071.6 73 1069.4 74.6 1068 Z"/><path d="M73.6 1073.2 L71.8 1074.8 M77.3 1067 L78.4 1065.9 M79.4 1069 L80.5 1067.9"/></g><g stroke="#cccccc" stroke-width="1.2"><circle cx="201.5" cy="1067.3" r="7.3"/><path d="M198.3 1064.1 L204.7 1070.5 M204.7 1064.1 L198.3 1070.5"/><path d="M237.9 1059.5 L245.6 1074.6 H230.2 Z"/><path d="M237.9 1064.8 V1069.6"/><circle cx="237.9" cy="1072" r="0.4" fill="#cccccc"/><circle cx="273.7" cy="1067.3" r="7.3"/><path d="M273.7 1066 V1071.4"/><circle cx="273.7" cy="1063.4" r="0.5" fill="#cccccc"/></g></svg><div class="t" style="left:93px;top:1053.5px;height:28px;line-height:28px;font-size:16px;color:#cccccc">Launchpad</div><div class="t" style="left:214.2px;top:1053.5px;height:28px;line-height:28px;font-size:16px;color:#cccccc">0</div><div class="t" style="left:250px;top:1053.5px;height:28px;line-height:28px;font-size:16px;color:#cccccc">0</div><div class="t" style="left:287.5px;top:1053.5px;height:28px;line-height:28px;font-size:16px;color:#cccccc">1</div><svg style="left:1875px;top:1055px" width="30" height="25" viewBox="1875 1055 30 25" fill="none" stroke="#cccccc" stroke-width="1.3"><path d="M1886.6 1071.6 C1887.4 1070.4 1887.4 1068.5 1887.4 1064.6 a4.9 4.9 0 0 1 9.8 0 C1897.2 1068.5 1897.2 1070.4 1898 1071.6 Z" stroke-linejoin="round"/><path d="M1891 1072.4 a1.4 1.4 0 0 0 2.8 0"/></svg><svg style="left:1099px;top:160px" width="821" height="893" viewBox="1099 160 821 893"><defs><linearGradient id="sph" gradientUnits="userSpaceOnUse" x1="0" y1="246" x2="0" y2="778"><stop offset="0" stop-color="#000"/><stop offset="0.045" stop-color="#080808"/><stop offset="0.085" stop-color="#2a2a2a"/><stop offset="0.12" stop-color="#3e3e3e"/><stop offset="0.17" stop-color="#575757"/><stop offset="0.23" stop-color="#747474"/><stop offset="0.33" stop-color="#8e8e8e"/><stop offset="0.43" stop-color="#a0a0a0"/><stop offset="0.5" stop-color="#aaaaaa"/><stop offset="0.665" stop-color="#b6b6b6"/><stop offset="0.815" stop-color="#b6b6b6"/><stop offset="0.93" stop-color="#acacac"/><stop offset="1" stop-color="#a0a0a0"/></linearGradient><radialGradient id="sphlight" gradientUnits="userSpaceOnUse" cx="1340" cy="590" r="240"><stop offset="0" stop-color="#fff" stop-opacity="0.10"/><stop offset="0.5" stop-color="#fff" stop-opacity="0.05"/><stop offset="1" stop-color="#fff" stop-opacity="0"/></radialGradient><radialGradient id="sphcap" gradientUnits="userSpaceOnUse" cx="1530" cy="264" r="85" gradientTransform="translate(1530 264) scale(1 0.36) translate(-1530 -264)"><stop offset="0" stop-color="#000" stop-opacity="0.95"/><stop offset="0.6" stop-color="#000" stop-opacity="0.5"/><stop offset="1" stop-color="#000" stop-opacity="0"/></radialGradient><radialGradient id="btop" gradientUnits="userSpaceOnUse" cx="1115" cy="690" r="380" gradientTransform="translate(1115 690) scale(1 0.5) translate(-1115 -690)"><stop offset="0" stop-color="#adadad"/><stop offset="0.5" stop-color="#868686"/><stop offset="0.8" stop-color="#747474"/><stop offset="1" stop-color="#6a6a6a"/></radialGradient><linearGradient id="bfront" gradientUnits="userSpaceOnUse" x1="1120" y1="672" x2="1470" y2="920"><stop offset="0" stop-color="#dcdcdc"/><stop offset="1" stop-color="#a5a5a5"/></linearGradient><radialGradient id="rim" gradientUnits="userSpaceOnUse" cx="1527.7" cy="512" r="266"><stop offset="0.86" stop-color="#000" stop-opacity="0"/><stop offset="1" stop-color="#000" stop-opacity="0.75"/></radialGradient><linearGradient id="rimmaskg" gradientUnits="userSpaceOnUse" x1="0" y1="246" x2="0" y2="330"><stop offset="0" stop-color="#fff"/><stop offset="0.35" stop-color="#fff" stop-opacity="0.5"/><stop offset="1" stop-color="#fff" stop-opacity="0"/></linearGradient><mask id="rimmask" maskUnits="userSpaceOnUse" x="1099" y="160" width="821" height="893"><rect x="1099" y="160" width="821" height="893" fill="url(#rimmaskg)"/></mask></defs><polygon points="1567.5,775.0 1532.8,778.0 1498.0,776.3 1463.8,770.2 1430.6,759.7 1399.1,744.9 1369.9,726.1 1343.3,703.7 1319.8,678.0 1299.9,649.4 1283.9,618.5 1272.1,585.8 1264.7,551.8 1261.7,517.1 1263.4,482.3 1269.5,448.1 1280.0,414.9 1294.8,383.4 1313.6,354.2 1336.0,327.6 1361.7,304.1 1390.3,284.2 1421.2,268.2 1453.9,256.4 1487.9,249.0 1522.6,246.0 1557.4,247.7 1591.6,253.8 1624.8,264.3 1656.3,279.1 1685.5,297.9 1712.1,320.3 1735.6,346.0 1755.5,374.6 1771.5,405.5 1783.3,438.2 1790.7,472.2 1793.7,506.9 1792.0,541.7 1785.9,575.9 1775.4,609.1 1760.6,640.6 1741.8,669.8 1719.4,696.4 1693.7,719.9 1665.1,739.8 1634.2,755.8 1601.5,767.6" fill="url(#sph)"/><polygon points="1567.5,775.0 1532.8,778.0 1498.0,776.3 1463.8,770.2 1430.6,759.7 1399.1,744.9 1369.9,726.1 1343.3,703.7 1319.8,678.0 1299.9,649.4 1283.9,618.5 1272.1,585.8 1264.7,551.8 1261.7,517.1 1263.4,482.3 1269.5,448.1 1280.0,414.9 1294.8,383.4 1313.6,354.2 1336.0,327.6 1361.7,304.1 1390.3,284.2 1421.2,268.2 1453.9,256.4 1487.9,249.0 1522.6,246.0 1557.4,247.7 1591.6,253.8 1624.8,264.3 1656.3,279.1 1685.5,297.9 1712.1,320.3 1735.6,346.0 1755.5,374.6 1771.5,405.5 1783.3,438.2 1790.7,472.2 1793.7,506.9 1792.0,541.7 1785.9,575.9 1775.4,609.1 1760.6,640.6 1741.8,669.8 1719.4,696.4 1693.7,719.9 1665.1,739.8 1634.2,755.8 1601.5,767.6" fill="url(#sphlight)"/><polygon points="1567.5,775.0 1532.8,778.0 1498.0,776.3 1463.8,770.2 1430.6,759.7 1399.1,744.9 1369.9,726.1 1343.3,703.7 1319.8,678.0 1299.9,649.4 1283.9,618.5 1272.1,585.8 1264.7,551.8 1261.7,517.1 1263.4,482.3 1269.5,448.1 1280.0,414.9 1294.8,383.4 1313.6,354.2 1336.0,327.6 1361.7,304.1 1390.3,284.2 1421.2,268.2 1453.9,256.4 1487.9,249.0 1522.6,246.0 1557.4,247.7 1591.6,253.8 1624.8,264.3 1656.3,279.1 1685.5,297.9 1712.1,320.3 1735.6,346.0 1755.5,374.6 1771.5,405.5 1783.3,438.2 1790.7,472.2 1793.7,506.9 1792.0,541.7 1785.9,575.9 1775.4,609.1 1760.6,640.6 1741.8,669.8 1719.4,696.4 1693.7,719.9 1665.1,739.8 1634.2,755.8 1601.5,767.6" fill="url(#rim)" mask="url(#rimmask)"/><polygon points="1567.5,775.0 1532.8,778.0 1498.0,776.3 1463.8,770.2 1430.6,759.7 1399.1,744.9 1369.9,726.1 1343.3,703.7 1319.8,678.0 1299.9,649.4 1283.9,618.5 1272.1,585.8 1264.7,551.8 1261.7,517.1 1263.4,482.3 1269.5,448.1 1280.0,414.9 1294.8,383.4 1313.6,354.2 1336.0,327.6 1361.7,304.1 1390.3,284.2 1421.2,268.2 1453.9,256.4 1487.9,249.0 1522.6,246.0 1557.4,247.7 1591.6,253.8 1624.8,264.3 1656.3,279.1 1685.5,297.9 1712.1,320.3 1735.6,346.0 1755.5,374.6 1771.5,405.5 1783.3,438.2 1790.7,472.2 1793.7,506.9 1792.0,541.7 1785.9,575.9 1775.4,609.1 1760.6,640.6 1741.8,669.8 1719.4,696.4 1693.7,719.9 1665.1,739.8 1634.2,755.8 1601.5,767.6" fill="url(#sphcap)"/><polygon points="1206.8,517.9 1261.5,518 1262.5,530 1266.6,542.7 1274,555 1283.7,566.2 1295,577 1309.3,587.6 1330,598 1352,606.8 1380,616 1407.6,623.9 1440,629 1471.6,632.7 1470.5,668.7 1115,668.7" fill="url(#btop)"/><polygon points="1470.5,668.7 1471.6,632.7 1475,680 1478.5,720 1481,776 1476,921.6 1475,921.6" fill="#9c9c9c"/><polygon points="1115,668.7 1470.5,668.7 1475,921.6 1171.8,921.6" fill="url(#bfront)"/></svg></div></body></html>
